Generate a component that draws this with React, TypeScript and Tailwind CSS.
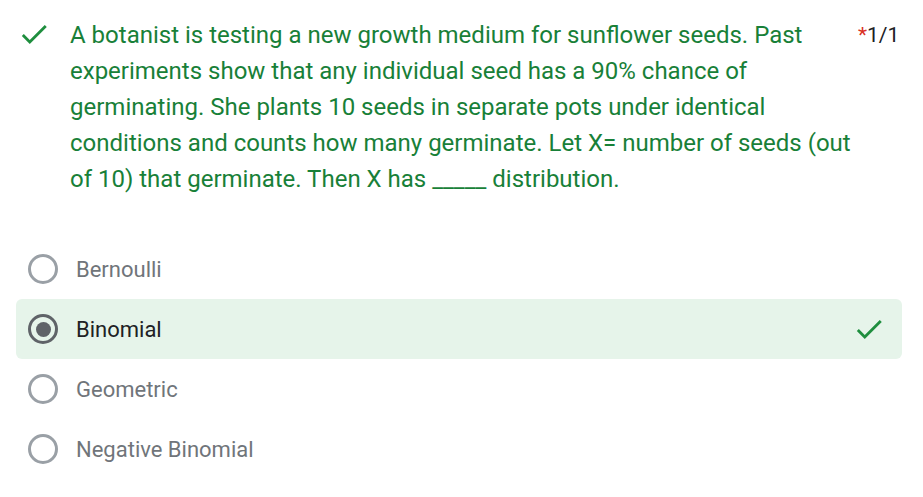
import React from "react";

const Check = ({ className }: { className?: string }) => (
  <svg viewBox="0 0 24 24" className={className} fill="#1e8e3e">
    <path d="M9 16.17L4.83 12l-1.42 1.41L9 19 21 7l-1.41-1.41z" />
  </svg>
);

const options = ["Bernoulli", "Binomial", "Geometric", "Negative Binomial"];

export default function App() {
  return (
    <div className="w-[923px] h-[497px] bg-white overflow-hidden" style={{ fontFamily: "Roboto, 'Liberation Sans', sans-serif" }}>
      <div className="flex items-start pt-[17px]">
        <div className="w-[70px] shrink-0 flex">
          <Check className="w-[34px] h-[34px] ml-[17px] mt-0" />
        </div>
        <div className="w-[786px] text-[24px] leading-[36px] text-[#188038]">
          A botanist is testing a new growth medium for sunflower seeds. Past experiments show that any individual seed has a 90% chance of germinating. She plants 10 seeds in separate pots under identical conditions and counts how many germinate. Let X= number of seeds (out of 10) that germinate. Then X has _____ distribution.
        </div>
        <div className="ml-[2px] text-[21px] leading-[36px] text-[#202124] whitespace-nowrap">
          <span className="text-[#d93025]">*</span>1/1
        </div>
      </div>
      <div className="mt-[42px] pl-[16px] pr-[21px] flex flex-col">
        {options.map((o) => {
          const sel = o === "Binomial";
          return (
            <div
              key={o}
              className={`h-[60px] flex items-center rounded-[6px] pl-[12px] pr-[16px] ${sel ? "bg-[#e6f4ea]" : ""}`}
            >
              {sel ? (
                <div className="w-[30px] h-[30px] rounded-full border-[3px] border-[#5f6368] flex items-center justify-center">
                  <div className="w-[15px] h-[15px] rounded-full bg-[#5f6368]" />
                </div>
              ) : (
                <div className="w-[30px] h-[30px] rounded-full border-[3px] border-[#9aa0a6]" />
              )}
              <div className={`ml-[18px] text-[22px] ${sel ? "text-[#202124]" : "text-[#70757a]"}`}>{o}</div>
              {sel && <Check className="ml-auto w-[34px] h-[34px]" />}
            </div>
          );
        })}
      </div>
    </div>
  );
}
